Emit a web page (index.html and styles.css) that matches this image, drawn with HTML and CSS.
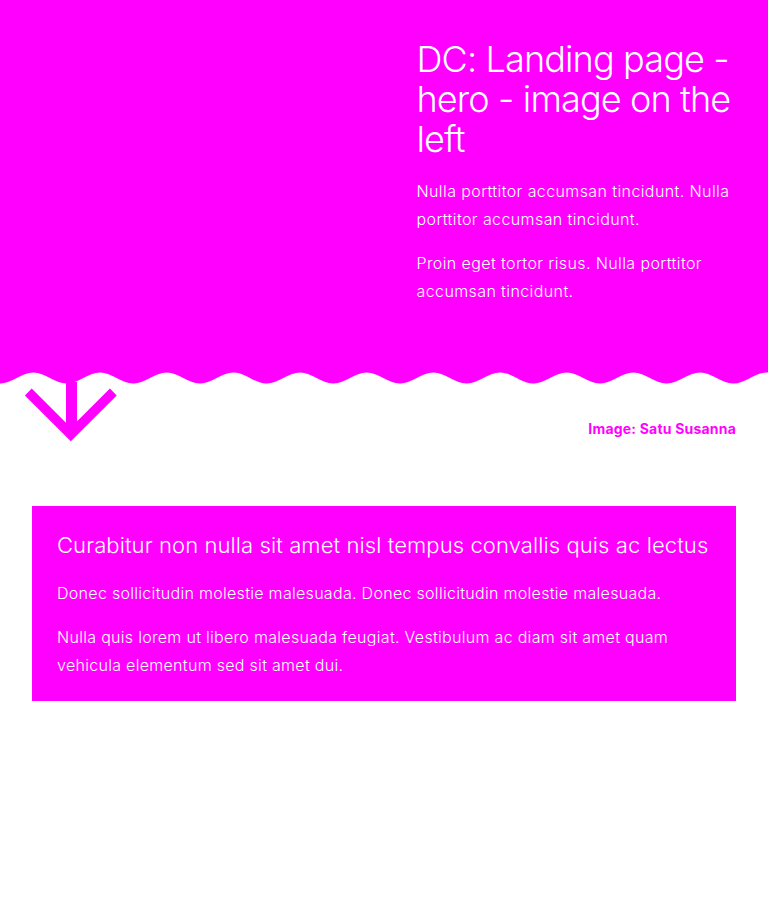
FILE: index.html
```html
<!DOCTYPE html>
<html lang="en">
<head>
<meta charset="utf-8">
<title>DC: Landing page - hero - image on the left</title>
<link rel="stylesheet" href="styles.css">
</head>
<body>
<header class="hero">
  <div class="hero-grid">
    <div class="hero-image" role="img" aria-label="Hero image"></div>
    <div class="hero-text">
      <h1 class="hero-title">DC: Landing page - hero - image on the left</h1>
      <p class="hero-p">Nulla porttitor accumsan tincidunt. Nulla porttitor accumsan tincidunt.</p>
      <p class="hero-p">Proin eget tortor risus. Nulla porttitor accumsan tincidunt.</p>
    </div>
  </div>
</header>
<svg class="wave" viewBox="0 0 768 12" preserveAspectRatio="none" aria-hidden="true">
  <path fill="#ff00ff" d="M0,0 L0,11.5 C12,11.5 21.33,0.5 33.33,0.5 S54.67,11.5 66.67,11.5 S88,0.5 100,0.5 S121.33,11.5 133.33,11.5 S154.67,0.5 166.67,0.5 S188,11.5 200,11.5 S221.33,0.5 233.33,0.5 S254.67,11.5 266.67,11.5 S288,0.5 300,0.5 S321.33,11.5 333.33,11.5 S354.67,0.5 366.67,0.5 S388,11.5 400,11.5 S421.33,0.5 433.33,0.5 S454.67,11.5 466.67,11.5 S488,0.5 500,0.5 S521.33,11.5 533.33,11.5 S554.67,0.5 566.67,0.5 S588,11.5 600,11.5 S621.33,0.5 633.33,0.5 S654.67,11.5 666.67,11.5 S688,0.5 700,0.5 S721.33,11.5 733.33,11.5 S754.67,0.5 766.67,0.5 S788,11.5 800,11.5 L800,0 Z"/>
</svg>
<div class="meta-row">
  <svg class="arrow" width="104" height="60" viewBox="0 0 104 60" aria-hidden="true">
    <path d="M51.5,-2 L51.5,50" stroke="#ff00ff" stroke-width="11" fill="none"/>
    <path d="M8.3,8 L50.8,50.5 L93.3,8" stroke="#ff00ff" stroke-width="9.6" fill="none" stroke-linejoin="miter"/>
  </svg>
  <p class="caption">Image: Satu Susanna</p>
</div>
<main class="content">
  <section class="card">
    <h2 class="card-title">Curabitur non nulla sit amet nisl tempus convallis quis ac lectus</h2>
    <p class="card-p">Donec sollicitudin molestie malesuada. Donec sollicitudin molestie malesuada.</p>
    <p class="card-p">Nulla quis lorem ut libero malesuada feugiat. Vestibulum ac diam sit amet quam vehicula elementum sed sit amet dui.</p>
  </section>
</main>
</body>
</html>
```
FILE: styles.css
```css
* { box-sizing: border-box; }
html, body { margin: 0; padding: 0; background: #ffffff; }
body {
  font-family: Inter, "Noto Sans", "DejaVu Sans", sans-serif;
  color: #ffffff;
}
.hero {
  background: #ff00ff;
  padding: 0 32px;
}
.hero-grid {
  display: grid;
  grid-template-columns: 1fr 1fr;
  column-gap: 65px;
  height: 372px;
}
.hero-image {
  background: #ff00ff;
}
.hero-text {
  padding-top: 39px;
}
.hero-title {
  margin: 0;
  font-size: 36px;
  line-height: 40px;
  font-weight: 300;
  letter-spacing: -0.85px;
}
.hero-p {
  margin: 16px 0 0;
  font-size: 16px;
  line-height: 28px;
  font-weight: 300;
  letter-spacing: 0.4px;
}
.hero-title + .hero-p { margin-top: 18px; }
.wave {
  display: block;
  width: 100%;
  height: 12px;
}
.meta-row {
  display: flex;
  justify-content: space-between;
  align-items: flex-start;
  padding: 0 32px 0 20px;
}
.arrow {
  display: block;
  overflow: visible;
}
.caption {
  margin: 36px 0 0;
  font-size: 14px;
  line-height: 18px;
  font-weight: 700;
  letter-spacing: 0.2px;
  color: #ff00ff;
}
.content {
  padding: 0 32px;
  margin-top: 62px;
}
.card {
  background: #ff00ff;
  padding: 26px 25px 22px;
}
.card-title {
  margin: 0;
  font-size: 22px;
  line-height: 26px;
  font-weight: 300;
  letter-spacing: 0.1px;
}
.card-p {
  margin: 16px 0 0;
  font-size: 16px;
  line-height: 28px;
  font-weight: 300;
  letter-spacing: 0.3px;
}
.card-title + .card-p { margin-top: 21px; }
```
